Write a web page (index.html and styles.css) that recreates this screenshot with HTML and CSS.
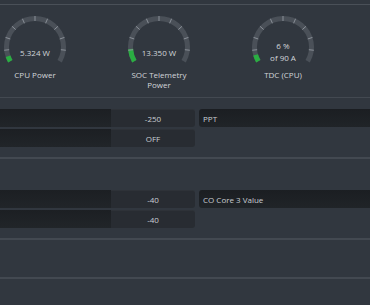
FILE: index.html
```html
<!DOCTYPE html>
<html>
<head>
<meta charset="utf-8">
<link rel="stylesheet" href="styles.css">
</head>
<body>
<div class="app">
  <div class="topline"></div>
  <div class="gauges">
    <div class="gauge">
      <svg class="dial" width="70" height="58" viewBox="0 0 70 58">
        <path class="track" d="M10.32 49.25 A28.5 28.5 0 1 1 59.68 49.25"/>
        <path class="fill" d="M10.32 49.25 A28.5 28.5 0 0 1 8.05 44.28"/>
        <g class="ticks">
          <line x1="9.14" y1="37.72" x2="4.17" y2="38.24"/>
          <line x1="10.27" y1="26.97" x2="5.52" y2="25.42"/>
          <line x1="15.68" y1="17.6" x2="11.96" y2="14.26"/>
          <line x1="24.42" y1="11.25" x2="22.39" y2="6.68"/>
          <line x1="35" y1="9" x2="35" y2="4"/>
          <line x1="45.58" y1="11.25" x2="47.61" y2="6.68"/>
          <line x1="54.32" y1="17.6" x2="58.04" y2="14.26"/>
          <line x1="59.73" y1="26.97" x2="64.48" y2="25.42"/>
          <line x1="60.86" y1="37.72" x2="65.83" y2="38.24"/>
        </g>
        <text class="val" x="35" y="40">5.324 W</text>
      </svg>
      <div class="label">CPU Power</div>
    </div>
    <div class="gauge">
      <svg class="dial" width="70" height="58" viewBox="0 0 70 58">
        <path class="track" d="M10.32 49.25 A28.5 28.5 0 1 1 59.68 49.25"/>
        <path class="fill" d="M10.32 49.25 A28.5 28.5 0 0 1 6.57 36.99"/>
        <g class="ticks">
          <line x1="9.14" y1="37.72" x2="4.17" y2="38.24"/>
          <line x1="10.27" y1="26.97" x2="5.52" y2="25.42"/>
          <line x1="15.68" y1="17.6" x2="11.96" y2="14.26"/>
          <line x1="24.42" y1="11.25" x2="22.39" y2="6.68"/>
          <line x1="35" y1="9" x2="35" y2="4"/>
          <line x1="45.58" y1="11.25" x2="47.61" y2="6.68"/>
          <line x1="54.32" y1="17.6" x2="58.04" y2="14.26"/>
          <line x1="59.73" y1="26.97" x2="64.48" y2="25.42"/>
          <line x1="60.86" y1="37.72" x2="65.83" y2="38.24"/>
        </g>
        <text class="val" x="35" y="40">13.350 W</text>
      </svg>
      <div class="label">SOC Telemetry Power</div>
    </div>
    <div class="gauge">
      <svg class="dial" width="70" height="58" viewBox="0 0 70 58">
        <path class="track" d="M10.32 49.25 A28.5 28.5 0 1 1 59.68 49.25"/>
        <path class="fill" d="M10.32 49.25 A28.5 28.5 0 0 1 7.6 42.86"/>
        <g class="ticks">
          <line x1="9.14" y1="37.72" x2="4.17" y2="38.24"/>
          <line x1="10.27" y1="26.97" x2="5.52" y2="25.42"/>
          <line x1="15.68" y1="17.6" x2="11.96" y2="14.26"/>
          <line x1="24.42" y1="11.25" x2="22.39" y2="6.68"/>
          <line x1="35" y1="9" x2="35" y2="4"/>
          <line x1="45.58" y1="11.25" x2="47.61" y2="6.68"/>
          <line x1="54.32" y1="17.6" x2="58.04" y2="14.26"/>
          <line x1="59.73" y1="26.97" x2="64.48" y2="25.42"/>
          <line x1="60.86" y1="37.72" x2="65.83" y2="38.24"/>
        </g>
        <text class="val" x="35" y="33.5">6 %</text>
        <text class="val" x="35" y="45">of 90 A</text>
      </svg>
      <div class="label">TDC (CPU)</div>
    </div>
  </div>
  <div class="sep sep-thin"></div>
  <div class="section first">
    <div class="row">
      <div class="field"><div class="track-part"></div><div class="num">-250</div></div>
      <div class="name">PPT</div>
    </div>
    <div class="row">
      <div class="field"><div class="track-part"></div><div class="num">OFF</div></div>
    </div>
  </div>
  <div class="sep"></div>
  <div class="section second">
    <div class="row">
      <div class="field"><div class="track-part"></div><div class="num">-40</div></div>
      <div class="name">CO Core 3 Value</div>
    </div>
    <div class="row">
      <div class="field"><div class="track-part"></div><div class="num">-40</div></div>
    </div>
  </div>
  <div class="sep"></div>
  <div class="blank"></div>
  <div class="sep"></div>
</div>
</body>
</html>
```
FILE: styles.css
```css
html, body {
  margin: 0;
  padding: 0;
  background: #31373f;
  overflow: hidden;
}
body {
  font-family: "Open Sans", "Noto Sans", sans-serif;
  font-size: 8px;
  color: #d2d6da;
}
.app {
  width: 370px;
  height: 305px;
  display: flex;
  flex-direction: column;
}
.topline {
  height: 4px;
  border-bottom: 1px solid #4a5058;
  flex: none;
}
.gauges {
  display: flex;
  gap: 54px;
  margin-top: 7px;
  flex: none;
}
.gauge {
  width: 70px;
  display: flex;
  flex-direction: column;
  align-items: center;
}
.dial {
  display: block;
}
.track {
  fill: none;
  stroke: #4a5058;
  stroke-width: 5;
}
.fill {
  fill: none;
  stroke: #2aae42;
  stroke-width: 5;
}
.ticks line {
  stroke: #8a9098;
  stroke-width: 1;
}
.val {
  fill: #d2d6da;
  font-family: "Open Sans", "Noto Sans", sans-serif;
  font-size: 8px;
  text-anchor: middle;
  dominant-baseline: central;
}
.label {
  text-align: center;
  line-height: 10px;
  width: 70px;
}
.sep {
  height: 2px;
  background: #434951;
  flex: none;
}
.sep-thin {
  height: 1px;
  margin-top: 7px;
}
.section {
  display: flex;
  flex-direction: column;
  gap: 2px;
  flex: none;
}
.section.first {
  padding-top: 11px;
  padding-bottom: 10px;
}
.section.second {
  padding-top: 31px;
  padding-bottom: 10px;
}
.row {
  display: flex;
  gap: 4px;
  height: 18px;
}
.field {
  width: 195px;
  display: flex;
  border-radius: 0 3px 3px 0;
  overflow: hidden;
  background: #282c32;
  box-shadow: inset 0 1px 0 rgba(255,255,255,0.03);
}
.track-part {
  width: 111px;
  background: linear-gradient(#1c1f23, #212529);
}
.num {
  flex: 1;
  display: flex;
  align-items: center;
  justify-content: center;
  color: #c9ced3;
}
.name {
  flex: 1;
  display: flex;
  align-items: center;
  padding-left: 4px;
  border-radius: 3px 0 0 3px;
  background: linear-gradient(#1b1e22, #202428);
  color: #c9ced3;
}
.blank {
  height: 37px;
  flex: none;
}
```
